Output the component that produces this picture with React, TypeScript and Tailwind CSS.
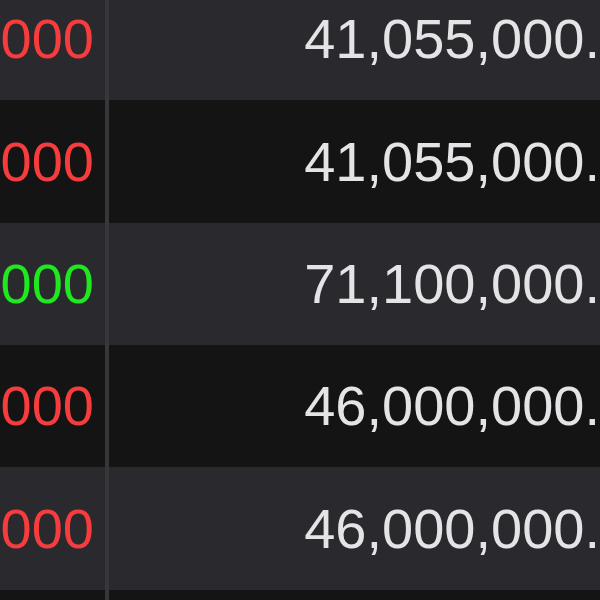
const rows = [
  { left: '000', leftColor: 'text-[#f63c3c]', right: '41,055,000.', bg: 'bg-[#29292e]', h: 'h-[122px]' },
  { left: '000', leftColor: 'text-[#f63c3c]', right: '41,055,000.', bg: 'bg-[#141415]', h: 'h-[123px]' },
  { left: '000', leftColor: 'text-[#20e820]', right: '71,100,000.', bg: 'bg-[#29292e]', h: 'h-[122px]' },
  { left: '000', leftColor: 'text-[#f63c3c]', right: '46,000,000.', bg: 'bg-[#141415]', h: 'h-[122px]' },
  { left: '000', leftColor: 'text-[#f63c3c]', right: '46,000,000.', bg: 'bg-[#29292e]', h: 'h-[123px]' },
  { left: '', leftColor: 'text-[#f63c3c]', right: '', bg: 'bg-[#141415]', h: 'h-[122px]' },
];

export default function App() {
  return (
    <div className="w-[600px] h-[600px] overflow-hidden bg-[#141415] font-['Liberation_Sans',Arial,sans-serif]">
      <div className="-mt-[22px] flex flex-col">
        {rows.map((r, i) => (
          <div key={i} className={`flex ${r.h} ${r.bg}`}>
            <div
              className={`w-[109px] shrink-0 flex items-center justify-end overflow-hidden whitespace-nowrap pr-[11px] border-r-[4px] border-[#36363b] text-[56px] ${r.leftColor}`}
            >
              {r.left}
            </div>
            <div className="flex-1 flex items-center justify-end overflow-hidden whitespace-nowrap text-[56px] text-[#e4e4e6]">
              {r.right}
            </div>
          </div>
        ))}
      </div>
    </div>
  );
}
